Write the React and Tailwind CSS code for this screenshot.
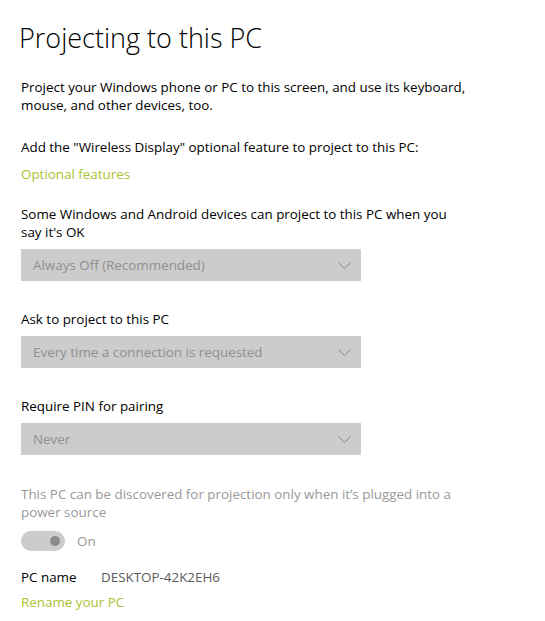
import React from 'react';

const Chevron = () => (
    <svg width="13" height="7" viewBox="0 0 13 7" fill="none">
        <path d="M0.5 0.5 L6.5 6.5 L12.5 0.5" stroke="#8a8a8a" strokeWidth="1" />
    </svg>
);

const Dropdown = ({ value }) => (
    <div className="mt-2 w-[340px] h-8 bg-[#cccccc] flex items-center justify-between pl-3 pr-[10px]">
        <span className="text-[#8f8f8f]">{value}</span>
        <Chevron />
    </div>
);

const App = () => {
    return (
        <div className="w-[545px] h-[621px] bg-white pl-[21px] font-['Open_Sans',sans-serif] text-[13.4px] leading-[18px] text-black overflow-hidden">
            <h1 className="pt-[18px] -ml-[2px] text-[27px] leading-[40px] font-light">Projecting to this PC</h1>

            <p className="mt-5 w-[447px]">
                Project your Windows phone or PC to this screen, and use its keyboard, mouse, and other devices, too.
            </p>

            <p className="mt-6">Add the "Wireless Display" optional feature to project to this PC:</p>
            <p className="mt-[9px] text-[#a9c334]">Optional features</p>

            <p className="mt-[22px] w-[447px]">Some Windows and Android devices can project to this PC when you say it's OK</p>
            <Dropdown value="Always Off (Recommended)" />

            <p className="mt-[29px]">Ask to project to this PC</p>
            <Dropdown value="Every time a connection is requested" />

            <p className="mt-[29px]">Require PIN for pairing</p>
            <Dropdown value="Never" />

            <p className="mt-[30px] w-[447px] text-[#999999]">
                This PC can be discovered for projection only when it’s plugged into a power source
            </p>

            <div className="mt-[10px] flex items-center gap-3">
                <div className="w-11 h-5 rounded-full bg-[#cccccc] flex items-center justify-end pr-[5px]">
                    <div className="w-[10px] h-[10px] rounded-full bg-[#8c8c8c]" />
                </div>
                <span className="text-[#999999]">On</span>
            </div>

            <div className="mt-[17px] flex">
                <span className="w-20">PC name</span>
                <span className="text-[#5a5a5a]">DESKTOP-42K2EH6</span>
            </div>
            <p className="mt-[7px] text-[#a9c334]">Rename your PC</p>
        </div>
    );
};

export default App;
